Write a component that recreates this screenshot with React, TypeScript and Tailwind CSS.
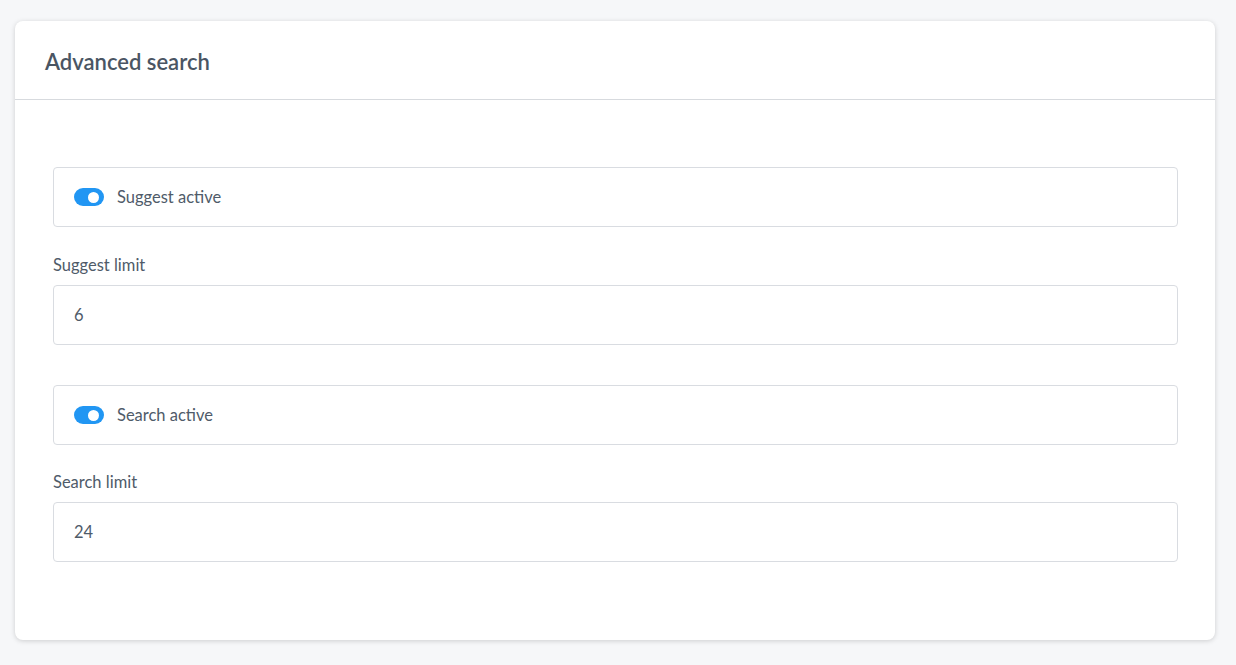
import React from "react";

function Toggle() {
  return (
    <span className="relative inline-flex h-[18px] w-[30px] shrink-0 items-center rounded-full bg-[#2196f3]">
      <span className="absolute right-[5px] h-[11px] w-[11px] rounded-full bg-white" />
    </span>
  );
}

function ToggleRow({ label }: { label: string }) {
  return (
    <div className="flex h-[60px] items-center gap-[13px] rounded-[4px] border border-[#d9dce1] pl-5">
      <Toggle />
      <span className="text-[16.5px] text-[#4f5b69]">{label}</span>
    </div>
  );
}

function NumberField({ label, value, top }: { label: string; value: string; top: string }) {
  return (
    <div className={top}>
      <label className="mb-2 block text-[16.5px] leading-6 text-[#4f5b69]">{label}</label>
      <div className="flex h-[60px] items-center rounded-[4px] border border-[#d9dce1] pl-5 text-[16.5px] text-[#4f5b69]">
        {value}
      </div>
    </div>
  );
}

export default function App() {
  return (
    <div
      className="min-h-screen bg-[#f6f7f9] px-[15px] pt-[21px] pb-6"
      style={{ fontFamily: "Lato, 'Noto Sans', sans-serif" }}
    >
      <div className="w-[1200px] rounded-lg bg-white shadow-[0_1px_5px_rgba(0,0,0,0.17)]">
        <div className="flex h-[79px] items-center border-b border-[#d7dade] px-[30px] pt-[3px]">
          <h1 className="text-[22px] font-semibold text-[#4a5563]">Advanced search</h1>
        </div>
        <div className="pl-[38px] pr-[37px] pt-[67px] pb-[78px]">
          <ToggleRow label="Suggest active" />
          <NumberField label="Suggest limit" value="6" top="mt-[26px]" />
          <div className="mt-10">
            <ToggleRow label="Search active" />
          </div>
          <NumberField label="Search limit" value="24" top="mt-[25px]" />
        </div>
      </div>
    </div>
  );
}
